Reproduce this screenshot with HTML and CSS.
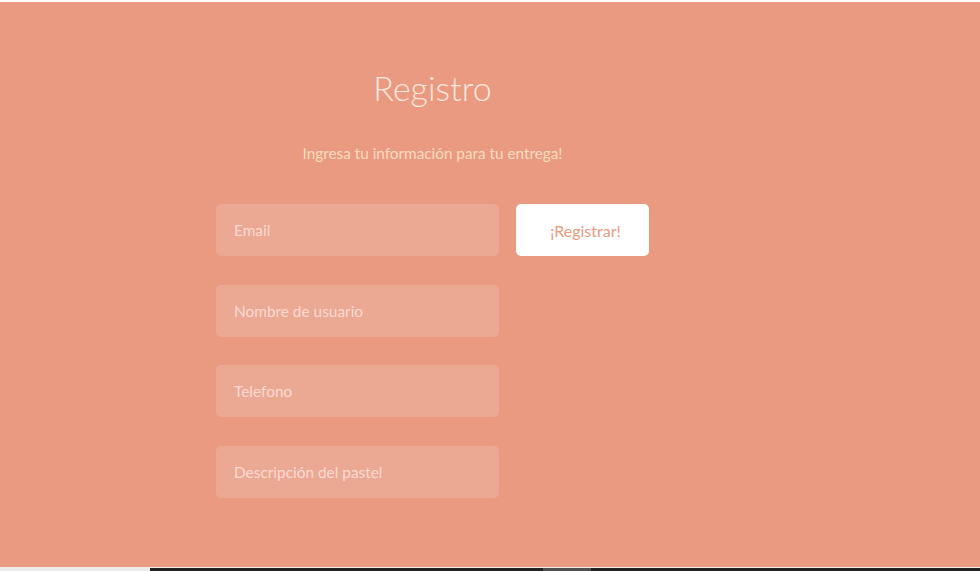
FILE: index.html
```html
<!DOCTYPE html>
<html lang="es">
<head>
<meta charset="utf-8">
<title>Registro</title>
<link rel="stylesheet" href="styles.css">
</head>
<body>
<main class="page">
  <section class="form-wrap">
    <h1 class="title">Registro</h1>
    <p class="subtitle">Ingresa tu información para tu entrega!</p>
    <form class="form">
      <div class="fields">
        <input class="field" type="text" placeholder="Email">
        <input class="field" type="text" placeholder="Nombre de usuario">
        <input class="field" type="text" placeholder="Telefono">
        <input class="field" type="text" placeholder="Descripción del pastel">
      </div>
      <button class="submit" type="button">¡Registrar!</button>
    </form>
  </section>
</main>
<div class="bottom-bar">
  <div class="bar-left"></div>
  <div class="bar-dark">
    <div class="bar-thumb"></div>
  </div>
</div>
</body>
</html>
```
FILE: styles.css
```css
* { box-sizing: border-box; }
html, body { margin: 0; padding: 0; }
body {
  background: #ffffff;
  font-family: "Lato", "Open Sans", sans-serif;
  height: 571px;
  overflow: hidden;
  padding-top: 2px;
  display: flex;
  flex-direction: column;
}
.page {
  background: #e99a80;
  height: 565px;
  padding-left: 216px;
}
.form-wrap {
  width: 433px;
  display: flex;
  flex-direction: column;
  align-items: center;
}
.title {
  margin: 64px 0 0 0;
  font-weight: 300;
  font-size: 34px;
  line-height: 44px;
  color: #fde8de;
}
.subtitle {
  margin: 33px 0 0 0;
  font-weight: 400;
  font-size: 15.3px;
  line-height: 20px;
  color: #f9dac0;
}
.form {
  align-self: stretch;
  margin-top: 41px;
  display: flex;
  align-items: flex-start;
  gap: 17px;
}
.fields {
  display: flex;
  flex-direction: column;
  gap: 28.5px;
}
.field {
  width: 283px;
  height: 52px;
  border: none;
  border-radius: 5px;
  background: #eba893;
  padding: 0 18px;
  font-family: inherit;
  font-weight: 400;
  font-size: 15.4px;
  color: #fbdad4;
  outline: none;
}
.field::placeholder { color: #fbdad4; opacity: 1; }
.submit {
  width: 133px;
  height: 52px;
  border: none;
  border-radius: 5px;
  background: #ffffff;
  color: #e99a80;
  font-family: inherit;
  font-weight: 400;
  font-size: 16px;
  padding: 0 0 0 6px;
}
.bottom-bar {
  display: flex;
  height: 4px;
  border-top: 1px solid #f4e9e6;
}
.bar-left { width: 150px; background: #ececec; }
.bar-dark {
  flex: 1;
  background: #222222;
  padding-left: 393px;
}
.bar-thumb { width: 48px; height: 100%; background: #505050; }
```
